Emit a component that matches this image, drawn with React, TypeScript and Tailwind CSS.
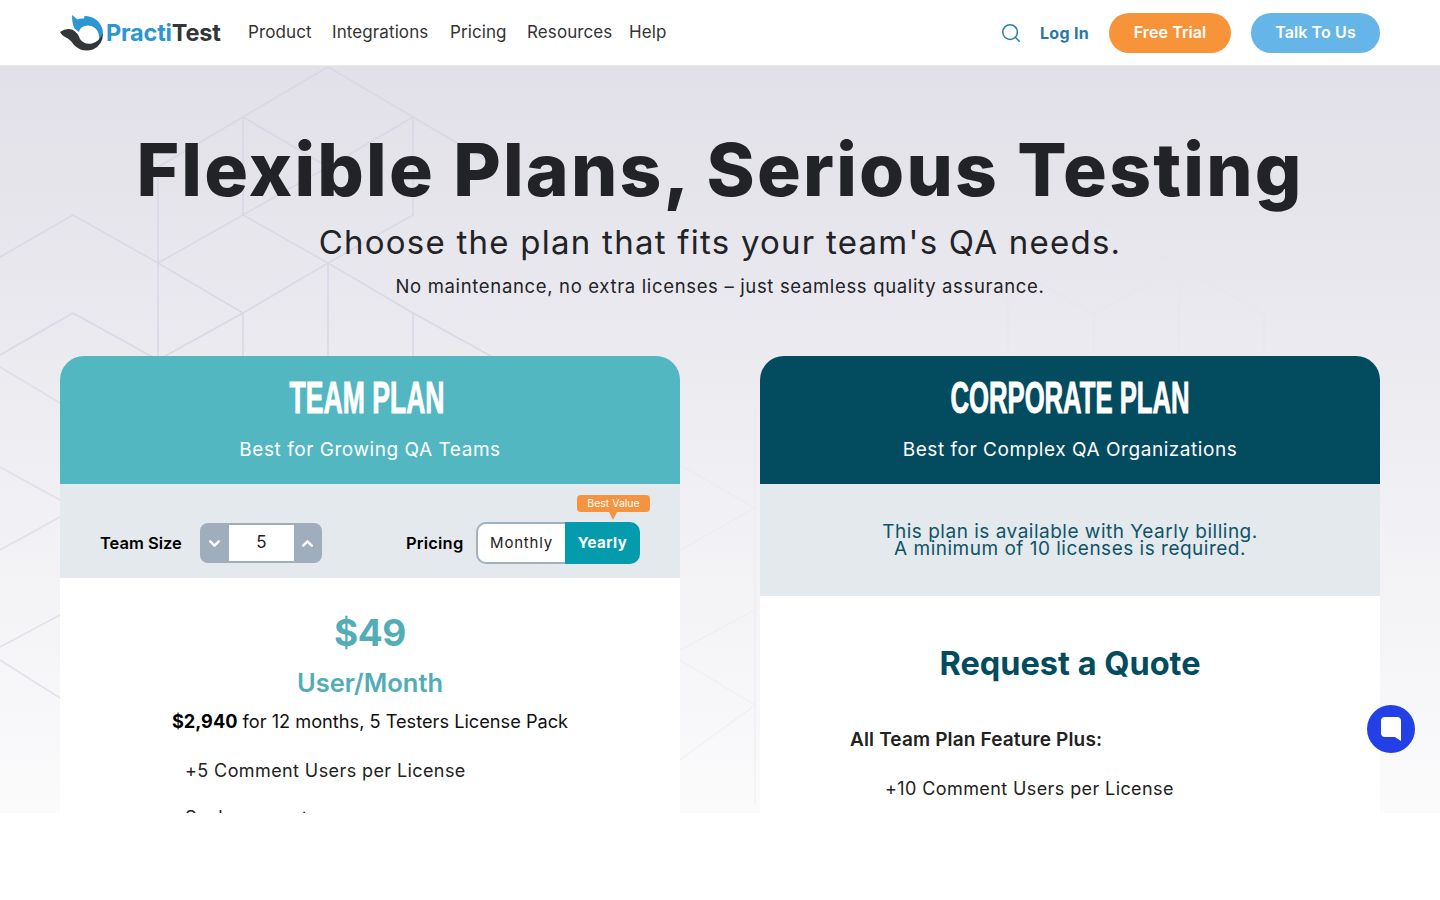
import React from "react";
import { ChevronDown, ChevronUp, Search } from "lucide-react";

const navLinks = [
  { label: "Product", cls: "w-[64px]" },
  { label: "Integrations", cls: "w-[98px]" },
  { label: "Pricing", cls: "w-[57px]" },
  { label: "Resources", cls: "w-[82px]" },
  { label: "Help", cls: "w-[38px]" },
];

const Logo = () => (
  <svg width="44" height="38" viewBox="60 15 44 38" className="shrink-0">
    <path
      d="M72 16 L77.5 20.5 Q80 19 84 19.5 L84.5 17 Q98 17.5 102.5 30 Q104 38 99 42 Q100 33 95 29 Q90 25.5 85 27 Q80 28 79 33 L74.5 29.5 Q72 25 72 16 Z"
      fill="#2b96cf"
    />
    <path
      d="M60 33 Q67 28 73 31 Q78 34 80 40 Q84 46 92 44.5 Q99 43 103 34 Q103 46 93 50.5 Q82 54 74 46 Q70 40 65 38 Q62 37 60 33 Z"
      fill="#333638"
    />
  </svg>
);

const HexLines = () => (
  <svg className="absolute inset-0 h-full w-full" viewBox="0 0 1440 747" fill="none">
    <g stroke="#d9d8e6" strokeWidth="1.6" transform="translate(0 -66)">
      <path d="M158 360V167L243 117L328 67L413 117L498 167" />
      <path d="M243 117V215L328 167M243 117L328 167L413 117V215L328 263L243 215L158 263L73 215L0 257" />
      <path d="M158 263L243 313L328 263L413 313L498 360M328 263V360M243 313V360M413 313V360L328 400M243 313L158 360M73 313L0 355M73 313L158 360" />
      <path d="M0 367L60 403M0 467L60 500M0 550L60 517M0 647L60 615M0 660L60 698" opacity="0.7" />
    </g>
    <g stroke="#e6e6ec" strokeWidth="1.2" transform="translate(0 -66)">
      <path d="M680 465L755 508L680 550M680 650L755 610M680 660L755 705L680 760M755 410V805" opacity="0.45" />
      <path d="M1008 266L1094 217L1179 266L1264 314V356M1008 266V356M1094 314V356M1179 266V356M1008 266L1094 314L1179 266" opacity="0.5" />
    </g>
  </svg>
);

const Header = ({ title, sub, bg, squeeze }: { title: string; sub: string; bg: string; squeeze: string }) => (
  <div className={`h-[128px] rounded-t-[24px] ${bg} text-center text-white`}>
    <h2 className={`pt-[15px] font-['Liberation_Sans',sans-serif] text-[45px] leading-[54px] font-bold [-webkit-text-stroke:1px_white] ${squeeze}`}>{title}</h2>
    <p className="mt-[11px] font-['Inter',sans-serif] text-[19px] leading-[28px] tracking-[0.55px]">{sub}</p>
  </div>
);

const App = () => {
  return (
    <div className="h-[900px] overflow-hidden bg-white font-['Inter',sans-serif]">
      <nav className="flex h-[66px] items-center border-b border-[#ececf0] bg-white px-[60px]">
        <Logo />
        <span className="ml-[2px] w-[142px] text-[23.5px] font-bold tracking-[-0.2px] text-[#333638]">
          <span className="text-[#2b96cf]">Practi</span>Test
        </span>
        <div className="flex gap-5 text-[17px] tracking-[0.1px] text-[#333]">
          {navLinks.map((l) => (
            <a key={l.label} className={l.cls}>
              {l.label}
            </a>
          ))}
        </div>
        <Search className="ml-auto text-[#2b7eb0]" size={22} strokeWidth={1.7} />
        <a className="ml-[18px] text-[16px] font-bold tracking-[0.3px] text-[#2777a8]">Log In</a>
        <button className="ml-5 h-10 w-[122px] rounded-full bg-[#f7943a] pb-[1px] text-[16px] font-semibold tracking-[0.1px] text-white">Free Trial</button>
        <button className="ml-5 h-10 w-[129px] rounded-full bg-[#66b5e8] pb-[1px] text-[16px] font-semibold tracking-[0.1px] text-white">Talk To Us</button>
      </nav>

      <main className="relative h-[747px] overflow-hidden bg-gradient-to-b from-[#e2e0e8] to-[#fbfbfc]">
        <HexLines />
        <div className="relative">
          <section className="pt-[60px] text-center text-[#212326]">
            <h1 className="text-[73px] leading-[88px] font-extrabold tracking-[2.2px]">Flexible Plans, Serious Testing</h1>
            <p className="mt-[8px] text-[33px] leading-[40px] tracking-[1.25px]">Choose the plan that fits your team's QA needs.</p>
            <p className="mt-[11px] text-[18.5px] leading-[26px] tracking-[0.66px]">No maintenance, no extra licenses – just seamless quality assurance.</p>
          </section>

          <div className="mt-[57px] grid grid-cols-2 gap-20 px-[60px]">
            <div>
              <Header title="TEAM PLAN" sub="Best for Growing QA Teams" bg="bg-[#53b7c2]" squeeze="scale-x-[0.59] pr-[10px]" />
              <div className="flex h-[94px] items-center bg-[#e4e9ed] pt-[24px] pl-[40px] text-black">
                <span className="w-[100px] text-[16.5px] font-semibold">Team Size</span>
                <div className="flex h-10 w-[122px] items-center rounded-lg bg-[#9fadbd] text-white">
                  <ChevronDown className="ml-[6px]" size={17} strokeWidth={3.5} />
                  <span className="ml-[6px] flex h-9 w-[65px] items-center justify-center bg-white text-[17px] text-[#222]">5</span>
                  <ChevronUp className="ml-[5px]" size={17} strokeWidth={3.5} />
                </div>
                <span className="ml-[84px] w-[58px] text-[16.5px] font-semibold tracking-[0.2px]">Pricing</span>
                <div className="relative ml-3 flex h-[42px] w-[164px] overflow-visible rounded-[10px]">
                  <span className="flex w-[89px] items-center justify-center rounded-l-[10px] border-2 border-r-0 border-[#a0afc2] bg-white text-[15px] tracking-[0.8px] text-[#222]">Monthly</span>
                  <span className="flex w-[75px] items-center justify-center rounded-r-[10px] bg-[#049cac] text-[15px] font-bold tracking-[0.5px] text-white">Yearly</span>
                  <span className="absolute top-[-27px] left-[101px] flex h-[17px] w-[73px] items-center justify-center rounded-[4px] bg-[#f59440] text-[10.5px] text-white">Best Value</span>
                  <span className="absolute top-[-10px] left-[133px] h-0 w-0 border-x-[4px] border-t-[8px] border-x-transparent border-t-[#f59440]" />
                </div>
              </div>
              <div className="h-[235px] bg-white text-center">
                <p className="pt-[31px] text-[37px] leading-[48px] font-bold tracking-[-0.5px] text-[#52adb6]">$49</p>
                <p className="mt-[8px] text-[25.5px] leading-[36px] font-semibold text-[#52adb6]">User/Month</p>
                <p className="mt-[6px] text-[18.2px] leading-[28px] text-[#111]">
                  <b className="font-bold text-black">$2,940</b> for 12 months, 5 Testers License Pack
                </p>
                <p className="mt-[22px] pl-[125px] text-left text-[18px] leading-[28px] tracking-[0.4px] text-[#222]">+5 Comment Users per License</p>
                <p className="mt-[19px] pl-[125px] text-left text-[18px] leading-[28px] tracking-[0.4px] text-[#222]">Scale support</p>
              </div>
            </div>

            <div>
              <Header title="CORPORATE PLAN" sub="Best for Complex QA Organizations" bg="bg-[#034b5f]" squeeze="scale-x-[0.57]" />
              <div className="flex h-[112px] flex-col justify-center bg-[#e4e9ed] text-center text-[19px] leading-[17px] tracking-[0.5px] text-[#0e5468]">
                <p>This plan is available with Yearly billing.</p>
                <p>A minimum of 10 licenses is required.</p>
              </div>
              <div className="h-[217px] bg-white">
                <h3 className="pt-[48px] text-center text-[32.5px] leading-[40px] font-bold text-[#034b5f]">Request a Quote</h3>
                <p className="mt-[42px] pl-[90px] text-[19px] leading-[28px] font-semibold tracking-[0.15px] text-[#222]">All Team Plan Feature Plus:</p>
                <p className="mt-[21px] pl-[125px] text-[18px] leading-[28px] tracking-[0.4px] text-[#222]">+10 Comment Users per License</p>
              </div>
            </div>
          </div>
        </div>
      </main>

      <button className="fixed top-[705px] left-[1367px] flex h-12 w-12 items-center justify-center rounded-full bg-[#2340e6]">
        <svg width="20" height="24" viewBox="0 0 20 24">
          <path d="M4 0H16Q20 0 20 4V24L14 20H4Q0 20 0 16V4Q0 0 4 0Z" fill="#fff" />
        </svg>
      </button>
    </div>
  );
};

export default App;
